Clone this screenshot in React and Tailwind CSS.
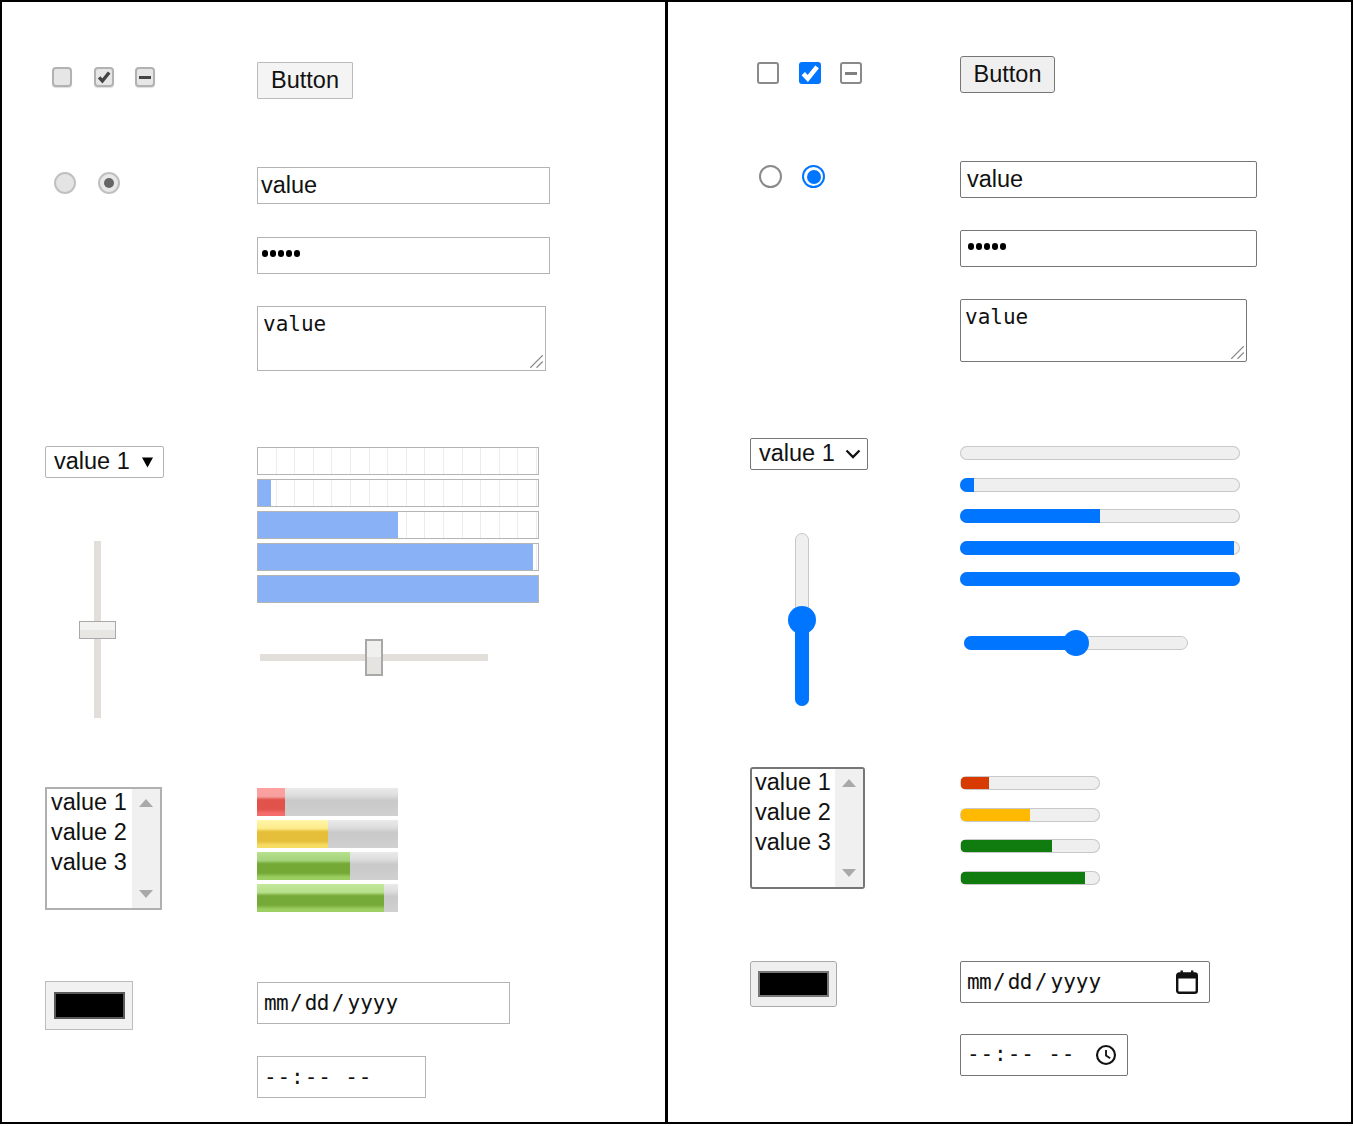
import React from 'react'

const sans = "font-['Liberation_Sans',Arial,sans-serif]"
const mono = "font-['DejaVu_Sans_Mono',monospace]"

const Check = ({ stroke = '#444', width = 3.8 }) => (
  <svg viewBox="0 0 18 18" className="w-full h-full">
    <path d="M3.5 9.5 L7.2 13.5 L14.8 4" fill="none" stroke={stroke} strokeWidth={width} />
  </svg>
)

const Calendar = () => (
  <svg viewBox="0 0 22 24" className="w-[22px] h-[24px]">
    <rect x="1.2" y="3.5" width="19.6" height="19.3" rx="2" fill="none" stroke="#111" strokeWidth="2.4" />
    <rect x="1" y="3" width="20" height="5.5" fill="#111" />
    <rect x="4.5" y="0.5" width="2.4" height="4" fill="#111" />
    <rect x="15" y="0.5" width="2.4" height="4" fill="#111" />
  </svg>
)

const Clock = () => (
  <svg viewBox="0 0 24 24" className="w-[22px] h-[22px]">
    <circle cx="12" cy="12" r="9.8" fill="none" stroke="#111" strokeWidth="2.3" />
    <path d="M12 6.5 V12.5 L16.5 15.5" fill="none" stroke="#111" strokeWidth="2" />
  </svg>
)

const ArrowUp = () => (
  <svg viewBox="0 0 14 8" className="w-[14px] h-[8px]"><path d="M7 0 L14 8 H0 Z" fill="#a9a9a9" /></svg>
)
const ArrowDown = () => (
  <svg viewBox="0 0 14 8" className="w-[14px] h-[8px]"><path d="M0 0 H14 L7 8 Z" fill="#a9a9a9" /></svg>
)

const Grip = () => (
  <svg viewBox="0 0 12 12" className="absolute right-[1px] bottom-[1px] w-[15px] h-[15px]">
    <path d="M1 11 L11 1 M6 11 L11 6" stroke="#8a8a8a" strokeWidth="0.9" />
  </svg>
)

const Dots = () => (
  <div className="flex gap-[1.6px]">
    {[0, 1, 2, 3, 4].map(i => <span key={i} className="w-[6.4px] h-[6.4px] rounded-full bg-black" />)}
  </div>
)

const DateText = () => (
  <>
    <span className="tracking-[-0.6px]">mm</span>
    <span className="mx-[2px]">/</span>
    <span className="tracking-[-0.6px]">dd</span>
    <span className="mx-[3px]">/</span>
    <span>yyyy</span>
  </>
)

// ================================================================
// OLD (LEFT) PANEL
// ================================================================
const OldBar = ({ pct }) => (
  <div className="h-[28px] w-[282px] border border-[#b4b4b4] bg-white relative overflow-hidden">
    <div className="absolute inset-0 bg-[repeating-linear-gradient(90deg,transparent_0,transparent_17.6px,#ececec_17.6px,#ececec_18.6px)]" />
    <div className="absolute left-0 top-0 bottom-0 bg-[#89b2f6]" style={{ width: `${pct}%` }} />
  </div>
)

const OldMeter = ({ pct, from, mid, to, top }) => (
  <div className="h-[28px] w-[141px] relative bg-[linear-gradient(#eaeaea_0%,#dedede_25%,#c9c9c9_45%,#d0d0d0_100%)]">
    <div
      className="absolute left-0 top-0 bottom-0"
      style={{ width: `${pct}%`, background: `linear-gradient(${top} 0%, ${from} 30%, ${mid} 42%, ${mid} 75%, ${to} 90%, ${to} 100%)` }}
    />
  </div>
)

const OldPanel = () => (
  <div className={`w-[668px] h-full border-2 border-r-[3px] border-black shrink-0 flex ${sans} text-[#111]`}>
    <div className="w-[255px] shrink-0 pl-[43px]">
      <div className="flex items-center h-[20px] mt-[65px] ml-[7px] gap-[21.5px]">
        <div className="w-[20px] h-[20px] rounded-[4px] border-2 border-[#b2b2b2] bg-[#e6e6e6] shadow-[0_1px_1px_#ddd]" />
        <div className="w-[20px] h-[20px] rounded-[4px] border-2 border-[#b2b2b2] bg-[#e6e6e6] shadow-[0_1px_1px_#ddd]"><Check /></div>
        <div className="w-[20px] h-[20px] rounded-[4px] border-2 border-[#b2b2b2] bg-[#e6e6e6] shadow-[0_1px_1px_#ddd] flex items-center justify-center">
          <div className="w-[12px] h-[3px] bg-[#444]" />
        </div>
      </div>
      <div className="flex items-center h-[22px] mt-[85px] ml-[9px] gap-[22px]">
        <div className="w-[22px] h-[22px] rounded-full border-2 border-[#c0c0c0] bg-[#e4e4e4]" />
        <div className="w-[22px] h-[22px] rounded-full border-2 border-[#c0c0c0] bg-[#e8e8e8] flex items-center justify-center">
          <div className="w-[10px] h-[10px] rounded-full bg-[#666]" />
        </div>
      </div>
      <div className="mt-[252px] w-[119px] h-[32px] border border-[#b4b4b4] rounded-[2px] bg-white flex items-center pl-[8px] text-[23.5px] leading-none whitespace-nowrap">
        <span>value 1</span>
        <svg viewBox="0 0 12 11" className="w-[11px] h-[11px] ml-[12px]"><path d="M0 0 H12 L6 11 Z" fill="#000" /></svg>
      </div>
      <div className="mt-[63px] w-[37px] ml-[34px] h-[177px] relative flex justify-center">
        <div className="w-[7px] h-full bg-[#e2dfdb]" />
        <div className="absolute left-0 top-[80px] w-[37px] h-[18px] border border-[#a8a8a8] bg-[linear-gradient(#f2f2f0_50%,#e8e6e2_50%)]" />
      </div>
      <div className="mt-[69px] w-[117px] h-[123px] border-2 border-[#b0b0b0] bg-white flex text-[23.5px] leading-[30px] whitespace-nowrap">
        <div className="flex-1 pl-[4px] -mt-[2px]">
          <div>value 1</div>
          <div>value 2</div>
          <div>value 3</div>
        </div>
        <div className="w-[28px] bg-[#f0f0f0] flex flex-col items-center justify-between py-[10px]">
          <ArrowUp />
          <ArrowDown />
        </div>
      </div>
      <div className="mt-[71px] w-[88px] h-[49px] border border-[#bcbcbc] bg-[#f1f1f1] flex items-center justify-center">
        <div className="w-[71px] h-[27px] bg-black border-[2px] border-[#5a5a5a]" />
      </div>
    </div>
    <div className="flex-1 min-w-0">
      <div className="mt-[60px] w-[96px] h-[37px] border border-[#bbb] bg-[#f4f4f4] flex items-center justify-center text-[23.5px] leading-none rounded-[1px]">Button</div>
      <div className="mt-[68px] w-[293px] h-[37px] border border-[#b4b4b4] flex items-center pl-[3px] text-[23.5px] leading-none">value</div>
      <div className="mt-[33px] w-[293px] h-[37px] border border-[#b4b4b4] flex items-center pl-[4px] pb-[4px]"><Dots /></div>
      <div className={`mt-[32px] w-[289px] h-[65px] border border-[#b4b4b4] relative pl-[5px] pt-[4px] text-[21px] leading-[26px] ${mono}`}>
        value
        <Grip />
      </div>
      <div className="mt-[76px] flex flex-col gap-[4px]">
        <OldBar pct={0} />
        <OldBar pct={4.8} />
        <OldBar pct={50} />
        <OldBar pct={98.3} />
        <OldBar pct={100} />
      </div>
      <div className="mt-[36px] w-[228px] ml-[3px] h-[37px] relative flex items-center">
        <div className="w-full h-[7px] bg-[#e2dfdb]" />
        <div className="absolute left-[105px] top-0 w-[18px] h-[37px] border-2 border-[#a8a8a8] bg-[linear-gradient(#f0f0ee_50%,#e6e4e0_50%)]" />
      </div>
      <div className="mt-[112px] flex flex-col gap-[4px]">
        <OldMeter pct={20} top="#ffa0a0" from="#f7a0a0" mid="#e0524a" to="#f56c6c" />
        <OldMeter pct={50} top="#fff6a8" from="#fdeb8a" mid="#e6bf3a" to="#f5dc62" />
        <OldMeter pct={66} top="#b6e08e" from="#a5d47c" mid="#74a935" to="#9ccf62" />
        <OldMeter pct={90} top="#c4e89c" from="#b5e08a" mid="#76aa38" to="#9ccf62" />
      </div>
      <div className={`mt-[70px] w-[253px] h-[42px] border border-[#b4b4b4] flex items-center pl-[6px] pt-[2px] text-[21px] ${mono}`}>
        <DateText />
      </div>
      <div className={`mt-[32px] w-[169px] h-[42px] border border-[#b4b4b4] flex items-center pl-[6px] pt-[1px] text-[21px] tracking-[0.9px] whitespace-pre ${mono}`}>
        --:-- --
      </div>
    </div>
  </div>
)

// ================================================================
// NEW (RIGHT) PANEL
// ================================================================
const NewBar = ({ pct, w = 'w-[280px]', color = 'bg-[#0075ff]', inset = '' }) => (
  <div className={`h-[14px] ${w} ${inset} rounded-full bg-[#efefef] shadow-[inset_0_0_0_1px_#c8c8c8] overflow-hidden`}>
    <div className={`h-full ${color}`} style={{ width: `${pct}%` }} />
  </div>
)

const NewPanel = () => (
  <div className={`flex-1 min-w-0 h-full border-2 border-l-0 border-black flex ${sans} text-[#111]`}>
    <div className="w-[292px] shrink-0 pl-[82px]">
      <div className="flex items-center h-[22px] mt-[60px] ml-[7px] gap-[19.5px]">
        <div className="w-[22px] h-[22px] rounded-[3px] border-2 border-[#8a8a8a] bg-white" />
        <div className="w-[22px] h-[22px] rounded-[3px] bg-[#0075ff]"><Check stroke="#fff" /></div>
        <div className="w-[22px] h-[22px] rounded-[3px] border-2 border-[#8a8a8a] bg-white flex items-center justify-center">
          <div className="w-[12px] h-[3px] bg-[#808080]" />
        </div>
      </div>
      <div className="flex items-center h-[23px] mt-[81px] ml-[9px] gap-[20px]">
        <div className="w-[23px] h-[23px] rounded-full border-2 border-[#8a8a8a] bg-white" />
        <div className="w-[23px] h-[23px] rounded-full border-2 border-[#0075ff] bg-white flex items-center justify-center">
          <div className="w-[14px] h-[14px] rounded-full bg-[#0075ff]" />
        </div>
      </div>
      <div className="mt-[250px] w-[118px] h-[32px] border border-[#767676] rounded-[2px] bg-white flex items-center pl-[8px] text-[23.5px] leading-none whitespace-nowrap">
        <span>value 1</span>
        <svg viewBox="0 0 16 10" className="w-[16px] h-[10px] ml-[10px]"><path d="M1.5 1.5 L8 8 L14.5 1.5" fill="none" stroke="#111" strokeWidth="2.3" /></svg>
      </div>
      <div className="mt-[63px] ml-[38px] w-[28px] h-[173px] relative flex justify-center">
        <div className="w-[14px] h-full rounded-full border border-[#c8c8c8] bg-[#efefef]" />
        <div className="absolute left-[7px] top-[87px] bottom-0 w-[14px] rounded-b-full bg-[#0075ff]" />
        <div className="absolute left-0 top-[73px] w-[28px] h-[28px] rounded-full bg-[#0075ff]" />
      </div>
      <div className="mt-[61px] w-[115px] h-[122px] border-2 border-[#767676] rounded-[3px] bg-white flex text-[23.5px] leading-[30px] whitespace-nowrap">
        <div className="flex-1 pl-[3px] -mt-[2px]">
          <div>value 1</div>
          <div>value 2</div>
          <div>value 3</div>
        </div>
        <div className="w-[28px] bg-[#f0f0f0] flex flex-col items-center justify-between py-[10px]">
          <ArrowUp />
          <ArrowDown />
        </div>
      </div>
      <div className="mt-[72px] w-[87px] h-[46px] border border-[#a8a8a8] rounded-[3px] bg-[#efefef] flex items-center justify-center">
        <div className="w-[71px] h-[26px] bg-black border-[2px] border-[#767676]" />
      </div>
    </div>
    <div className="flex-1 min-w-0">
      <div className="mt-[54px] w-[95px] h-[37px] border border-[#767676] rounded-[3px] bg-[#efefef] flex items-center justify-center text-[23.5px] leading-none">Button</div>
      <div className="mt-[68px] w-[297px] h-[37px] border border-[#767676] rounded-[2px] flex items-center pl-[6px] text-[23.5px] leading-none">value</div>
      <div className="mt-[32px] w-[297px] h-[37px] border border-[#767676] rounded-[2px] flex items-center pl-[7px] pb-[4px]"><Dots /></div>
      <div className={`mt-[32px] w-[287px] h-[63px] border border-[#767676] rounded-[2px] relative pl-[4px] pt-[4px] text-[21px] leading-[26px] ${mono}`}>
        value
        <Grip />
      </div>
      <div className="mt-[84px] flex flex-col gap-[17.5px]">
        <NewBar pct={0} />
        <NewBar pct={5} />
        <NewBar pct={50} />
        <NewBar pct={98} />
        <NewBar pct={100} />
      </div>
      <div className="mt-[43px] ml-[4px] w-[224px] h-[28px] relative flex items-center">
        <div className="w-full h-[14px] rounded-full border border-[#c8c8c8] bg-[#efefef]" />
        <div className="absolute left-0 top-[7px] w-[112px] h-[14px] rounded-l-full bg-[#0075ff]" />
        <div className="absolute left-[99px] top-0 w-[26px] h-[26px] mt-[1px] rounded-full bg-[#0075ff]" />
      </div>
      <div className="mt-[119px] flex flex-col gap-[17.5px]">
        <NewBar pct={20} w="w-[140px]" color="bg-[#d83b01]" inset="p-px" />
        <NewBar pct={50} w="w-[140px]" color="bg-[#ffb900]" inset="p-px" />
        <NewBar pct={66} w="w-[140px]" color="bg-[#107c10]" inset="p-px" />
        <NewBar pct={90} w="w-[140px]" color="bg-[#107c10]" inset="p-px" />
      </div>
      <div className={`mt-[76px] w-[250px] h-[42px] border border-[#767676] rounded-[2px] flex items-center pl-[6px] pr-[11px] text-[21px] ${mono}`}>
        <span className="flex items-center pt-[2px]"><DateText /></span>
        <span className="ml-auto flex"><Calendar /></span>
      </div>
      <div className={`mt-[31px] w-[168px] h-[42px] border border-[#767676] rounded-[2px] flex items-center pl-[6px] pr-[10px] text-[21px] whitespace-pre ${mono}`}>
        <span className="tracking-[0.9px]">--:-- --</span>
        <span className="ml-auto flex"><Clock /></span>
      </div>
    </div>
  </div>
)

export default function App() {
  return (
    <div className="w-[1353px] h-[1124px] bg-white flex overflow-hidden">
      <OldPanel />
      <NewPanel />
    </div>
  )
}
